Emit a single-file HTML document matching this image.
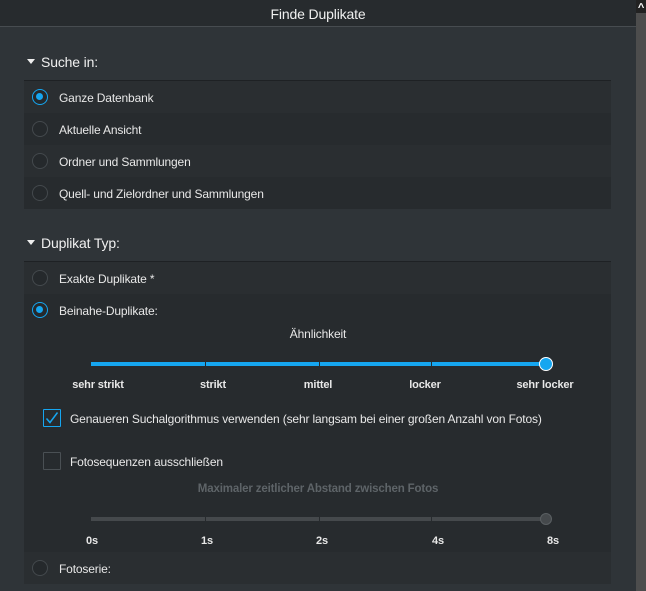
<!DOCTYPE html>
<html><head><style>
*{margin:0;padding:0;box-sizing:border-box}
body{width:646px;height:591px;background:#2f3438;font-family:"Liberation Sans",sans-serif;color:#e8e8e8;font-size:12px;letter-spacing:-0.15px;position:relative;overflow:hidden}
.a{position:absolute}
.hdr{left:0;top:0;width:636px;height:27px;background:#272b2e;border-bottom:1px solid #474c50;text-align:center;line-height:28px;font-size:14px;color:#f0f0f0}
.sb{left:636px;top:0;width:10px;height:591px;background:#4d4d4d}
.sec{font-size:14px;color:#f0f0f0}
.tri{display:inline-block;width:0;height:0;border-left:4px solid transparent;border-right:4px solid transparent;border-top:5px solid #eee;margin-right:6px;vertical-align:3px}
.row{left:24px;width:587px;height:32px;line-height:34px;padding-left:35px}
.r1{background:#2a2e31}.r2{background:#272b2e}
.rad{position:absolute;left:8px;top:8px;width:16px;height:16px;border-radius:50%;border:1.5px solid #44494d;background:#25292c}
.rad.on{border:1.5px solid #16a6f0;background:#25292c}
.rad.on:after{content:"";position:absolute;left:3px;top:3px;width:7px;height:7px;border-radius:50%;background:#16a6f0}
.lbl{font-size:11px;font-weight:bold;color:#e8e8e8;transform:translateX(-50%)}
.cb{width:18px;height:18px;border:1.5px solid #4a5054;border-radius:1px}
</style></head><body>
<div class="a hdr">Finde Duplikate</div>
<div class="a sb"><div style="height:13px;background:#222;color:#fff;font-size:11px;font-weight:bold;text-align:center;line-height:16px">^</div></div>

<div class="a sec" style="left:27px;top:54px"><span class="tri"></span>Suche in:</div>
<div class="a" style="left:24px;top:80px;width:587px;height:1px;background:#1e2124"></div>
<div class="a row r1" style="top:81px"><div class="rad on"></div>Ganze Datenbank</div>
<div class="a row r2" style="top:113px"><div class="rad"></div>Aktuelle Ansicht</div>
<div class="a row r1" style="top:145px"><div class="rad"></div>Ordner und Sammlungen</div>
<div class="a row r2" style="top:177px"><div class="rad"></div>Quell- und Zielordner und Sammlungen</div>

<div class="a sec" style="left:27px;top:235px"><span class="tri"></span>Duplikat Typ:</div>
<div class="a" style="left:24px;top:261px;width:587px;height:1px;background:#1e2124"></div>
<div class="a row r1" style="top:262px"><div class="rad"></div>Exakte Duplikate *</div>
<div class="a r2" style="left:24px;top:294px;width:587px;height:258px"></div>
<div class="a row" style="top:294px"><div class="rad on"></div>Beinahe-Duplikate:</div>
<div class="a" style="left:318px;top:327px;transform:translateX(-50%)">Ähnlichkeit</div>
<div class="a" style="left:91px;top:362px;width:455px;height:4px;background:#16a6f0"></div>
<div class="a" style="left:205px;top:362px;width:1px;height:4px;background:#272b2e"></div>
<div class="a" style="left:319px;top:362px;width:1px;height:4px;background:#272b2e"></div>
<div class="a" style="left:431px;top:362px;width:1px;height:4px;background:#272b2e"></div>
<div class="a" style="left:539px;top:357px;width:14px;height:14px;border-radius:50%;background:#16a6f0;border:1.5px solid #fff"></div>
<div class="a lbl" style="left:98px;top:379px">sehr strikt</div>
<div class="a lbl" style="left:213px;top:379px">strikt</div>
<div class="a lbl" style="left:318px;top:379px">mittel</div>
<div class="a lbl" style="left:425px;top:379px">locker</div>
<div class="a lbl" style="left:545px;top:379px">sehr locker</div>
<div class="a cb" style="left:43px;top:409px;border-color:#16a6f0"><svg width="16" height="16" viewBox="0 0 16 16" style="position:absolute;left:0;top:0"><path d="M2.5 8.5 L6 12.5 L13.5 2.5" stroke="#16a6f0" stroke-width="1.5" fill="none"/></svg></div>
<div class="a" style="left:70px;top:412px">Genaueren Suchalgorithmus verwenden (sehr langsam bei einer großen Anzahl von Fotos)</div>
<div class="a cb" style="left:43px;top:452px"></div>
<div class="a" style="left:70px;top:455px">Fotosequenzen ausschließen</div>
<div class="a" style="left:318px;top:483px;transform:translateX(-50%);color:#5e6468;font-weight:bold;font-size:11.5px">Maximaler zeitlicher Abstand zwischen Fotos</div>
<div class="a" style="left:91px;top:517px;width:455px;height:4px;background:#45494c"></div>
<div class="a" style="left:205px;top:517px;width:1px;height:4px;background:#272b2e"></div>
<div class="a" style="left:319px;top:517px;width:1px;height:4px;background:#272b2e"></div>
<div class="a" style="left:431px;top:517px;width:1px;height:4px;background:#272b2e"></div>
<div class="a" style="left:540px;top:513px;width:12px;height:12px;border-radius:50%;background:#45494c;border:1px solid #5a5f62"></div>
<div class="a lbl" style="left:92px;top:535px">0s</div>
<div class="a lbl" style="left:207px;top:535px">1s</div>
<div class="a lbl" style="left:322px;top:535px">2s</div>
<div class="a lbl" style="left:438px;top:535px">4s</div>
<div class="a lbl" style="left:553px;top:535px">8s</div>
<div class="a row r1" style="top:552px;padding-left:35px"><div class="rad"></div>Fotoserie:</div>
</body></html>
